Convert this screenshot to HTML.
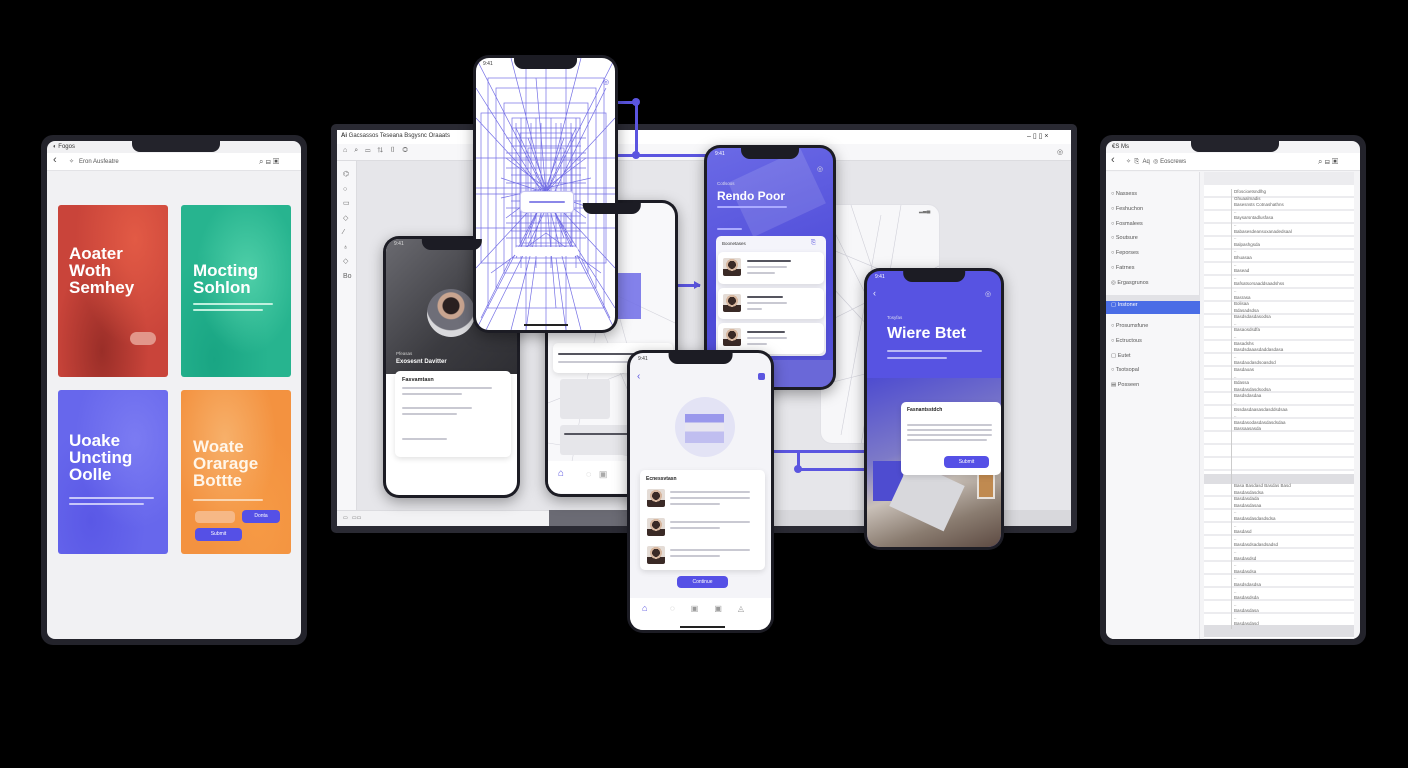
<!DOCTYPE html>
<html><head><meta charset="utf-8"><style>
*{box-sizing:border-box;margin:0;padding:0}
body{width:1408px;height:768px;background:#000;position:relative;overflow:hidden;font-family:"Liberation Sans",sans-serif}
.a{position:absolute}
.ph{position:absolute;background:#1c1c24;border-radius:16px;padding:3px;box-shadow:0 4px 14px rgba(0,0,0,.35)}
.sc{position:relative;width:100%;height:100%;border-radius:13px;overflow:hidden;background:#fff}
.notch{position:absolute;left:50%;transform:translateX(-50%);top:0;width:46%;height:11px;background:#1c1c24;border-radius:0 0 9px 9px;z-index:5}
.ln{position:absolute;height:2px;background:#c9c9d2;border-radius:1px}
.dk{background:#55555f}
.bl{position:absolute;background:#5b55e0}
.card{position:absolute;background:#fff;border-radius:5px;box-shadow:0 2px 6px rgba(0,0,0,.12)}
.av{position:absolute;border-radius:2px;background:radial-gradient(circle at 50% 38%,#3a2a26 0 4px,#d8b8a0 4px 6px,transparent 6px),linear-gradient(#e4dcd6 0 60%,#3a2a26 60%)}
.btn{position:absolute;background:#5550e6;border-radius:4px;color:#fff;font-size:5px;text-align:center}
.big{position:absolute;color:#fff;font-weight:bold;line-height:1}
.tab{position:absolute;border-radius:12px;background:#23232b;padding:6px}
</style></head><body>

<!-- LEFT TABLET -->
<div class="tab" style="left:41px;top:135px;width:266px;height:510px">
 <div class="sc" style="background:#f1f1f3;border-radius:8px">
  <div class="a" style="left:85px;top:0;width:88px;height:11px;background:#23232b;border-radius:0 0 8px 8px"></div>
  <div class="a" style="left:6px;top:3px;font-size:6px;color:#333">◐ Fogos</div>
  <div class="a" style="left:0;top:12px;width:100%;height:18px;background:#fff;border-bottom:1px solid #e3e3e6"></div>
  <div class="a" style="left:6px;top:13px;font-size:11px;color:#444">‹</div>
  <div class="a" style="left:22px;top:17px;font-size:6px;color:#555">✧ &nbsp; Eron Ausfeatre</div>
  <div class="a" style="left:212px;top:16px;font-size:8px;color:#555">⌕ ⊟ ▣</div>
  <div class="a" style="left:11px;top:64px;width:110px;height:172px;border-radius:3px;background:radial-gradient(ellipse at 70% 20%,#e25a45,transparent 55%),radial-gradient(ellipse at 40% 85%,#9a2e28,transparent 50%),#c9443a"></div>
  <div class="big" style="left:22px;top:104px;font-size:17px;line-height:17px">Aoater<br>Woth<br>Semhey</div>
  <div class="a" style="left:83px;top:191px;width:26px;height:13px;border-radius:7px;background:#e2968a"></div>
  <div class="a" style="left:134px;top:64px;width:110px;height:172px;border-radius:3px;background:radial-gradient(ellipse at 60% 40%,#4fcfa8,transparent 55%),radial-gradient(ellipse at 30% 90%,#19a583,transparent 50%),#27b48f"></div>
  <div class="big" style="left:146px;top:121px;font-size:17px;line-height:17px">Mocting<br>Sohlon</div>
  <div class="ln" style="left:146px;top:162px;width:80px;background:#bff0de"></div>
  <div class="ln" style="left:146px;top:168px;width:70px;background:#bff0de"></div>
  <div class="a" style="left:11px;top:249px;width:110px;height:164px;border-radius:3px;background:radial-gradient(ellipse at 70% 30%,#7b7bf2,transparent 55%),radial-gradient(ellipse at 30% 80%,#5a58e6,transparent 50%),#6767ec"></div>
  <div class="big" style="left:22px;top:291px;font-size:17px;line-height:17px">Uoake<br>Uncting<br>Oolle</div>
  <div class="ln" style="left:22px;top:356px;width:85px;background:#c7c7fa"></div>
  <div class="ln" style="left:22px;top:362px;width:75px;background:#c7c7fa"></div>
  <div class="a" style="left:134px;top:249px;width:110px;height:164px;border-radius:3px;background:radial-gradient(ellipse at 40% 30%,#f7b06a,transparent 55%),radial-gradient(ellipse at 70% 80%,#f69a45,transparent 50%),#f39240"></div>
  <div class="big" style="left:146px;top:297px;font-size:17px;line-height:17px;color:#fff6ea">Woate<br>Orarage<br>Bottte</div>
  <div class="ln" style="left:146px;top:358px;width:70px;background:#fbd6b0"></div>
  <div class="a" style="left:148px;top:370px;width:40px;height:12px;border-radius:4px;background:#f6b886"></div>
  <div class="btn" style="left:195px;top:369px;width:38px;height:13px;line-height:13px">Donta</div>
  <div class="btn" style="left:148px;top:387px;width:47px;height:13px;line-height:13px">Submit</div>
 </div>
</div>

<!-- RIGHT TABLET -->
<div class="tab" style="left:1100px;top:135px;width:266px;height:510px">
 <div class="sc" style="background:#f4f4f6;border-radius:8px">
  <div class="a" style="left:85px;top:0;width:88px;height:11px;background:#23232b;border-radius:0 0 8px 8px"></div>
  <div class="a" style="left:6px;top:3px;font-size:6px;color:#333">€S Ms</div>
  <div class="a" style="left:0;top:12px;width:100%;height:18px;background:#fff;border-bottom:1px solid #e3e3e6"></div>
  <div class="a" style="left:5px;top:13px;font-size:11px;color:#444">‹</div>
  <div class="a" style="left:20px;top:17px;font-size:6px;color:#555">✧ &nbsp;⎘ &nbsp;Aq &nbsp;◎ Eoscrews</div>
  <div class="a" style="left:212px;top:16px;font-size:8px;color:#555">⌕ ⊟ ▣</div>
  <div class="a" style="left:0;top:31px;width:94px;height:474px;background:#f7f7f9;border-right:1px solid #e0e0e4"></div>
  <div class="a" style="left:0;top:154px;width:94px;height:12px;background:#e2e2e6"></div>
  <div class="a" style="left:0;top:160px;width:94px;height:13px;background:#4a6de6"></div>
  <div class="a" style="left:5px;top:46px;font-size:5.5px;color:#555;line-height:14.8px;white-space:pre">○ Nassess
○ Feshuchon
○ Fosmalees
○ Soutsure
○ Feporses
○ Fatrnes
◎ Ergasgrunos</div>
  <div class="a" style="left:5px;top:161px;font-size:5.5px;color:#fff">▢ Instoner</div>
  <div class="a" style="left:5px;top:178px;font-size:5.5px;color:#555;line-height:14.8px;white-space:pre">○ Prosumsfune
○ Ectructous
▢ Eutet
○ Tsotsopal
▤ Posseen</div>
  <div class="a" style="left:98px;top:31px;width:150px;height:474px;background:repeating-linear-gradient(#fff 0 11px,#ececef 11px 13px)"></div>
  <div class="a" style="left:98px;top:31px;width:150px;height:12px;background:#ececef"></div>
  <div class="a" style="left:98px;top:333px;width:150px;height:10px;background:#dedee2"></div>
  <div class="a" style="left:98px;top:484px;width:150px;height:12px;background:#dedee2"></div>
  <div class="a" style="left:125px;top:48px;width:1px;height:440px;background:#ccc"></div>
  <div class="a" style="left:128px;top:48px;font-size:4.5px;color:#666;line-height:6.6px;white-space:pre">Dfoscioetsndlhg
Ghuaalmadis
Basesnsts Cotnashathns
..
Baysarsntadlusfasa
..
Babasesdeansoxanadedsaal
..
Balpashgsda
..
Bhuasaa
..
Basead
..
Bafsatsorsaaddsaadshss
..
Basrasa
Bolisaa
Bdasadsdsa
Basdsdasdasodsa
..
Basaosdsdfa
..
Basadshs
Basdsdaaasdaddasdasa
..
Basdaodasdsoasdsd
Basdaoas
..
Bdassa
Basdasdasdsodsa
Basdsdasdaa
..
Bssdasdaasasdasddsdsaa
..
Basdasodasdasdasdsdaa
Bassaasasda</div>
  <div class="a" style="left:128px;top:342px;font-size:4.5px;color:#666;line-height:6.6px;white-space:pre">Basa Basdasd Basdas Basd
Basdasdasdsa
Basdasdada
Basdasdasaa
..
Basdasdasdasdsdsa
..
Basdasd
..
Basdasdsadasdsadsd
..
Basdasdsd
..
Basdasdsa
..
Basdsdasdsa
..
Basdasdsda
..
Basdasdasa
..
Basdasdasd</div>
 </div>
</div>

<!-- MONITOR -->
<div class="a" style="left:331px;top:124px;width:746px;height:409px;background:#2a2a33;border-radius:5px;padding:6px">
 <div class="a" style="left:6px;top:6px;width:734px;height:396px;background:#e6e6ea;overflow:hidden">
  <div class="a" style="left:0;top:0;width:100%;height:14px;background:#fff"></div>
  <div class="a" style="left:4px;top:3px;font-size:6px;color:#333"><b>Ai</b> Gacsassos Teseana Bsgysnc Oraaats</div>
  <div class="a" style="left:690px;top:2px;font-size:7px;color:#333">– ▯ ▯ ×</div>
  <div class="a" style="left:0;top:14px;width:100%;height:17px;background:#f7f7f9;border-bottom:1px solid #dcdce0"></div>
  <div class="a" style="left:6px;top:17px;font-size:7px;color:#666;letter-spacing:7px">⌂⌕▭⇅▯◎</div>
  <div class="a" style="left:720px;top:18px;font-size:7px;color:#666">◎</div>
  <div class="a" style="left:0;top:31px;width:20px;height:350px;background:#f7f7f9;border-right:1px solid #dcdce0"></div>
  <div class="a" style="left:6px;top:38px;font-size:7px;color:#666;line-height:14.5px;white-space:pre">⌬
○
▭
◇
⁄
♁
◇
Bo</div>
  <div class="a" style="left:0;top:380px;width:100%;height:16px;background:#f2f2f4;border-top:1px solid #dcdce0"></div>
  <div class="a" style="left:212px;top:380px;width:522px;height:16px;background:#d8d8dc"></div>
  <div class="a" style="left:212px;top:380px;width:80px;height:16px;background:#6b6b74"></div>
  <div class="a" style="left:6px;top:385px;font-size:5px;color:#666">▭ &nbsp; ▭▭</div>
 </div>
</div>

<!-- connectors -->
<div class="bl" style="left:612px;top:101px;width:25px;height:3px"></div>
<div class="bl" style="left:635px;top:101px;width:3px;height:56px"></div>
<div class="a" style="left:632px;top:98px;width:8px;height:8px;border-radius:50%;background:#5b55e0"></div>
<div class="bl" style="left:617px;top:154px;width:90px;height:3px"></div>
<div class="a" style="left:632px;top:151px;width:8px;height:8px;border-radius:50%;background:#5b55e0"></div>
<div class="bl" style="left:615px;top:284px;width:85px;height:3px"></div>
<div class="a" style="left:694px;top:281px;border-left:7px solid #5b55e0;border-top:4px solid transparent;border-bottom:4px solid transparent"></div>
<div class="bl" style="left:836px;top:292px;width:24px;height:3px"></div>
<div class="a" style="left:857px;top:289px;border-left:6px solid #5b55e0;border-top:4px solid transparent;border-bottom:4px solid transparent"></div>
<div class="bl" style="left:774px;top:450px;width:92px;height:3px"></div>
<div class="bl" style="left:797px;top:450px;width:3px;height:20px"></div>
<div class="bl" style="left:797px;top:468px;width:67px;height:3px"></div>
<div class="a" style="left:794px;top:465px;width:8px;height:8px;border-radius:50%;background:#5b55e0"></div>

<!-- PHONE E ghost -->
<div class="a" style="left:820px;top:204px;width:120px;height:240px;background:#f7f7f9;border-radius:12px;border:1px solid #e1e1e6;overflow:hidden">
 <svg width="120" height="240" style="position:absolute;left:0;top:0"><g stroke="#cfcfd8" stroke-width=".6" fill="none"><path d="M0 40L120 90M10 20L100 200M60 10L20 230M0 120L120 60M30 0L110 240M0 180L120 150M80 0L40 240M0 70L120 200"/></g></svg>
 <div class="a" style="left:98px;top:3px;font-size:5px;color:#777">▂▃▄</div>
</div>

<!-- PHONE C behind -->
<div class="ph" style="left:545px;top:200px;width:133px;height:297px">
 <div class="sc" style="background:#f8f8fa">
  <div class="notch"></div>
  <svg width="127" height="290" style="position:absolute;left:0;top:0"><g stroke="#d4d4dc" stroke-width=".6" fill="none"><path d="M0 60L127 120M10 20L110 260M70 10L20 280M0 200L127 150M40 0L120 290M0 240L127 260"/></g></svg>
  <div class="a" style="left:67px;top:70px;width:26px;height:46px;background:#6f6ce6;opacity:.85"></div>
  <div class="card" style="left:5px;top:140px;width:120px;height:30px"></div>
  <div class="ln dk" style="left:10px;top:150px;width:110px"></div>
  <div class="ln" style="left:10px;top:158px;width:90px"></div>
  <div class="a" style="left:12px;top:176px;width:50px;height:40px;background:#e6e6ea;border-radius:3px"></div>
  <div class="a" style="left:12px;top:222px;width:90px;height:30px;background:#e6e6ea;border-radius:3px"></div>
  <div class="ln dk" style="left:16px;top:230px;width:70px"></div>
  <div class="a" style="left:0;top:258px;width:100%;height:32px;background:#fff"></div>
  <div class="a" style="left:10px;top:265px;font-size:10px;color:#5b55e0">⌂</div>
  <div class="a" style="left:38px;top:266px;font-size:9px;color:#aaa">◌ &nbsp; ▣</div>
 </div>
</div>

<!-- PHONE B -->
<div class="ph" style="left:383px;top:236px;width:137px;height:262px">
 <div class="sc">
  <div class="a" style="left:0;top:0;width:100%;height:135px;background:linear-gradient(135deg,#6a6a70,#3b3b40 60%,#2e2e33)"></div>
  <div class="notch"></div>
  <div class="a" style="left:8px;top:2px;font-size:5px;color:#ddd">9:41</div>
  <div class="a" style="left:41px;top:50px;width:48px;height:48px;border-radius:50%;background:radial-gradient(circle at 50% 35%,#2a2020 0 8px,#c9a590 9px 13px,#6e6e78 14px 24px,#d9d9dc 25px)"></div>
  <div class="a" style="left:10px;top:112px;font-size:4.5px;color:#ccc">Pfeasas</div>
  <div class="a" style="left:10px;top:120px;font-size:6px;color:#fff;font-weight:bold">Exosesnt Davitter</div>
  <div class="card" style="left:9px;top:132px;width:116px;height:86px"></div>
  <div class="a" style="left:16px;top:138px;font-size:5.5px;color:#222;font-weight:bold">Fasvamtasn</div>
  <div class="ln" style="left:16px;top:148px;width:90px"></div>
  <div class="ln" style="left:16px;top:154px;width:60px"></div>
  <div class="ln" style="left:16px;top:168px;width:70px"></div>
  <div class="ln" style="left:16px;top:174px;width:55px"></div>
  <div class="ln" style="left:16px;top:199px;width:45px"></div>
 </div>
</div>

<!-- PHONE A wireframe -->
<div class="ph" style="left:473px;top:55px;width:145px;height:278px">
 <div class="sc">
  <div class="notch"></div>
  <div class="a" style="left:7px;top:3px;font-size:5px;color:#333">9:41</div>
  <svg width="139" height="272" style="position:absolute;left:0;top:0"><g stroke="#5b55e0" stroke-width=".7" fill="none" opacity=".85">
   <rect x="20" y="30" width="100" height="200"/><rect x="28" y="45" width="84" height="170"/><rect x="36" y="60" width="68" height="140"/><rect x="44" y="75" width="52" height="110"/><rect x="52" y="90" width="36" height="80"/><rect x="12" y="20" width="116" height="230"/><rect x="5" y="55" width="125" height="150"/>
   <path d="M0 0L70 136L139 0M0 272L70 136L139 272M0 136H139M70 0V272M0 60L139 210M0 210L139 60M35 0L105 272M105 0L35 272M0 100H139M0 170H139M50 0V272M90 0V272M0 30L139 250M10 272L130 30M0 130L139 130M60 20L80 250"/>
   <path d="M30 80H110M30 95H110M30 110H110M30 125H110M30 150H110M30 165H110M30 180H110M45 60V210M60 60V210M75 60V210M100 60V210M25 140L115 120M25 120L115 150M40 70L100 200M100 70L40 200"/>
   <path d="M35 70H105M35 88H105M35 102H105M35 117H105M35 143H105M35 158H105M35 173H105M40 188H100M40 65V195M55 65V195M65 65V195M80 65V195M85 65V195M95 65V195M52 80L88 180M88 80L52 180M30 100L110 160M30 160L110 100"/>
   <path d="M15 215L70 175L125 215M5 260L35 200M134 260L105 200M50 272L60 200M90 272L80 200"/>
  </g></svg>
  <div class="a" style="left:44px;top:133px;width:54px;height:22px;background:#fff;border:1px solid #c8c6f2;border-radius:4px;box-shadow:0 0 6px rgba(91,85,224,.3)"></div>
  <div class="ln" style="left:53px;top:143px;width:36px;background:#8b87e8"></div>
  <div class="a" style="left:38px;top:189px;width:64px;height:9px;background:#fff;border-radius:3px"></div>
  <div class="a" style="left:127px;top:20px;font-size:7px;color:#5b55e0">◎</div>
  <div class="a" style="left:48px;top:266px;width:44px;height:2px;background:#222"></div>
 </div>
</div>

<!-- PHONE D blue -->
<div class="ph" style="left:704px;top:145px;width:132px;height:245px">
 <div class="sc" style="background:linear-gradient(160deg,#6b6ae6,#4e4bd8 60%,#5553d6)">
  <div class="a" style="left:30px;top:15px;width:80px;height:60px;background:rgba(255,255,255,.12);transform:rotate(-25deg)"></div>
  <div class="notch"></div>
  <div class="a" style="left:8px;top:3px;font-size:5px;color:#fff">9:41</div>
  <div class="a" style="left:110px;top:17px;font-size:7px;color:#ddd">◎</div>
  <div class="a" style="left:10px;top:33px;font-size:4.5px;color:#dde">Cotlsoos</div>
  <div class="big" style="left:10px;top:42px;font-size:12px">Rendo Poor</div>
  <div class="ln" style="left:10px;top:58px;width:70px;background:#aaf"></div>
  <div class="ln" style="left:10px;top:80px;width:25px;background:#aaf"></div>
  <div class="a" style="left:9px;top:88px;width:110px;height:120px;background:#f4f4fb;border-radius:5px"></div>
  <div class="a" style="left:15px;top:93px;font-size:4.5px;color:#333">Boonetases</div>
  <div class="a" style="left:104px;top:92px;font-size:6px;color:#5b55e0">⎘</div>
  <div class="card" style="left:11px;top:104px;width:106px;height:32px"></div>
  <div class="card" style="left:11px;top:140px;width:106px;height:31px"></div>
  <div class="card" style="left:11px;top:175px;width:106px;height:31px"></div>
  <div class="av" style="left:16px;top:110px;width:18px;height:18px"></div>
  <div class="av" style="left:16px;top:146px;width:18px;height:18px"></div>
  <div class="av" style="left:16px;top:180px;width:18px;height:18px"></div>
  <div class="ln dk" style="left:40px;top:112px;width:44px"></div><div class="ln" style="left:40px;top:118px;width:40px"></div><div class="ln" style="left:40px;top:124px;width:28px"></div>
  <div class="ln dk" style="left:40px;top:148px;width:36px"></div><div class="ln" style="left:40px;top:154px;width:40px"></div><div class="ln" style="left:40px;top:160px;width:15px"></div>
  <div class="ln dk" style="left:40px;top:183px;width:38px"></div><div class="ln" style="left:40px;top:189px;width:40px"></div><div class="ln" style="left:40px;top:195px;width:20px"></div>
  <div class="a" style="left:0;top:212px;width:100%;height:27px;background:#6a68d8"></div>
 </div>
</div>

<!-- PHONE F -->
<div class="ph" style="left:864px;top:268px;width:140px;height:282px">
 <div class="sc" style="background:#5753e2">
  <div class="notch"></div>
  <div class="a" style="left:8px;top:3px;font-size:5px;color:#fff">9:41</div>
  <div class="a" style="left:6px;top:17px;font-size:9px;color:#eef">‹</div>
  <div class="a" style="left:118px;top:19px;font-size:7px;color:#dde">◎</div>
  <div class="a" style="left:20px;top:44px;font-size:4.5px;color:#dde">Tosyfas</div>
  <div class="big" style="left:20px;top:55px;font-size:16px">Wiere Btet</div>
  <div class="ln" style="left:20px;top:79px;width:95px;background:#b9b8f5"></div>
  <div class="ln" style="left:20px;top:86px;width:60px;background:#b9b8f5"></div>
  <div class="a" style="left:0;top:107px;width:100%;height:169px;background:linear-gradient(160deg,#4e4cd0,#7d7ac8 40%,#c9c0b8 60%,#8a7c70 80%,#5d4a42)"></div>
  <div class="a" style="left:6px;top:190px;width:30px;height:40px;background:#4e4cd0"></div>
  <div class="a" style="left:30px;top:200px;width:60px;height:50px;background:#d8d8dc;transform:rotate(25deg)"></div>
  <div class="a" style="left:110px;top:198px;width:18px;height:30px;background:#c08a50;border:2px solid #e8e2dc"></div>
  <div class="card" style="left:34px;top:131px;width:100px;height:73px"></div>
  <div class="a" style="left:40px;top:136px;font-size:5px;color:#222;font-weight:bold">Fasnantsstdch</div>
  <div class="ln" style="left:40px;top:153px;width:85px"></div><div class="ln" style="left:40px;top:158px;width:85px"></div><div class="ln" style="left:40px;top:163px;width:85px"></div><div class="ln" style="left:40px;top:168px;width:80px"></div>
  <div class="btn" style="left:77px;top:185px;width:45px;height:12px;line-height:12px">Submit</div>
 </div>
</div>

<!-- PHONE G front -->
<div class="ph" style="left:627px;top:350px;width:147px;height:283px">
 <div class="sc" style="background:#f4f4f8">
  <div class="notch"></div>
  <div class="a" style="left:8px;top:3px;font-size:5px;color:#333">9:41</div>
  <div class="a" style="left:7px;top:18px;font-size:10px;color:#5b55e0">‹</div>
  <div class="a" style="left:128px;top:20px;width:7px;height:7px;border-radius:2px;background:#5b55e0"></div>
  <div class="a" style="left:45px;top:44px;width:60px;height:60px;border-radius:50%;background:#e3e3f5"></div>
  <div class="a" style="left:55px;top:61px;width:39px;height:29px;background:linear-gradient(#9a98ec 0 30%,#e8e6f0 30% 60%,#c0bef0 60%)"></div>
  <div class="card" style="left:10px;top:117px;width:125px;height:100px"></div>
  <div class="a" style="left:16px;top:123px;font-size:5px;color:#222;font-weight:bold">Ecnessvtasn</div>
  <div class="av" style="left:17px;top:136px;width:18px;height:18px"></div>
  <div class="av" style="left:17px;top:165px;width:18px;height:18px"></div>
  <div class="av" style="left:17px;top:193px;width:18px;height:18px"></div>
  <div class="ln" style="left:40px;top:138px;width:80px"></div><div class="ln" style="left:40px;top:144px;width:80px"></div><div class="ln" style="left:40px;top:150px;width:50px"></div>
  <div class="ln" style="left:40px;top:168px;width:80px"></div><div class="ln" style="left:40px;top:174px;width:50px"></div>
  <div class="ln" style="left:40px;top:196px;width:80px"></div><div class="ln" style="left:40px;top:202px;width:50px"></div>
  <div class="btn" style="left:47px;top:223px;width:51px;height:12px;line-height:12px">Continue</div>
  <div class="a" style="left:0;top:245px;width:100%;height:32px;background:#fff"></div>
  <div class="a" style="left:12px;top:250px;font-size:9px;color:#5b55e0">⌂</div>
  <div class="a" style="left:40px;top:251px;font-size:8px;color:#999;letter-spacing:16px">◌▣▣◬</div>
  <div class="a" style="left:50px;top:273px;width:45px;height:2px;background:#222"></div>
 </div>
</div>

</body></html>
